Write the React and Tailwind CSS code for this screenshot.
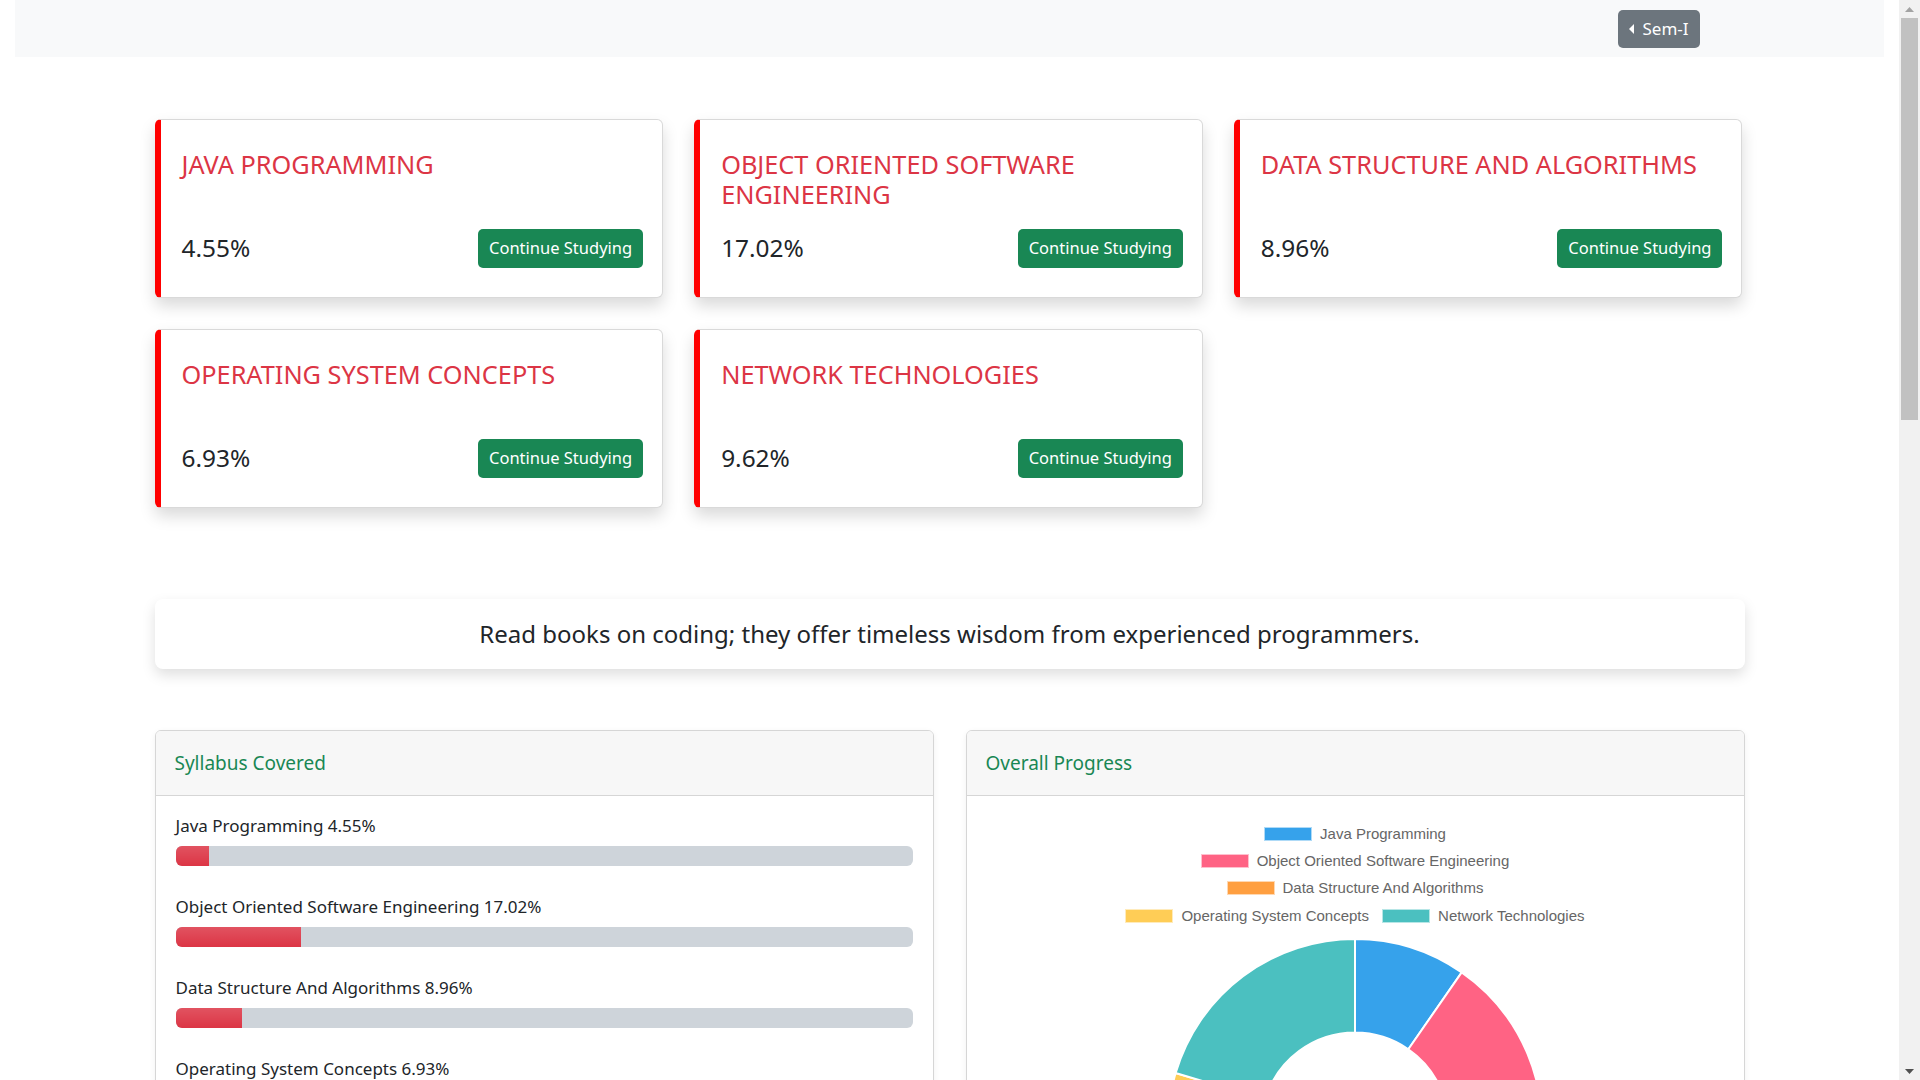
import React from "react";

const subjects = [
  { name: "JAVA PROGRAMMING", pct: "4.55%" },
  { name: "OBJECT ORIENTED SOFTWARE ENGINEERING", pct: "17.02%" },
  { name: "DATA STRUCTURE AND ALGORITHMS", pct: "8.96%" },
  { name: "OPERATING SYSTEM CONCEPTS", pct: "6.93%" },
  { name: "NETWORK TECHNOLOGIES", pct: "9.62%" },
];

const progress = [
  { label: "Java Programming", value: 4.55 },
  { label: "Object Oriented Software Engineering", value: 17.02 },
  { label: "Data Structure And Algorithms", value: 8.96 },
  { label: "Operating System Concepts", value: 6.93 },
  { label: "Network Technologies", value: 9.62 },
];

const colors = ["#36a2eb", "#ff6384", "#ff9f40", "#ffcd56", "#4bc0c0"];

const legendRows = [[0], [1], [2], [3, 4]];

function SubjectCard({ name, pct }) {
  return (
    <div className="bg-white rounded-[6px] border border-[#d9d9d9] border-l-[6px] border-l-[#ff0000] shadow-[0_8px_16px_rgba(0,0,0,0.15)] pt-[29px] pb-[29px] pl-[21px] pr-[19px]">
      <h4 className="text-[25.3px] leading-[30px] text-[#dc3545] min-h-[60px] mb-[20px] font-normal">
        {name}
      </h4>
      <div className="flex items-center justify-between h-[39px]">
        <span className="text-[24.4px] text-[#212529]">{pct}</span>
        <button className="h-[39px] px-[11px] rounded-[5px] bg-[#198754] text-white text-[16.5px]">
          Continue Studying
        </button>
      </div>
    </div>
  );
}

function Doughnut() {
  const values = progress.map((p) => p.value);
  const total = values.reduce((a, b) => a + b, 0);
  const cx = 190;
  const cy = 190;
  const R = 187;
  const r = 93.5;
  const pt = (rad, deg) => {
    const a = (deg * Math.PI) / 180;
    return [cx + rad * Math.sin(a), cy - rad * Math.cos(a)];
  };
  let acc = 0;
  const paths = values.map((v, i) => {
    const start = (acc / total) * 360;
    acc += v;
    const end = (acc / total) * 360;
    const large = end - start > 180 ? 1 : 0;
    const [x1, y1] = pt(R, start);
    const [x2, y2] = pt(R, end);
    const [x3, y3] = pt(r, end);
    const [x4, y4] = pt(r, start);
    const d = `M ${x1} ${y1} A ${R} ${R} 0 ${large} 1 ${x2} ${y2} L ${x3} ${y3} A ${r} ${r} 0 ${large} 0 ${x4} ${y4} Z`;
    return <path key={i} d={d} fill={colors[i]} stroke="#ffffff" strokeWidth="2" />;
  });
  return (
    <svg width="380" height="380" viewBox="0 0 380 380" className="block">
      {paths}
    </svg>
  );
}

function Scrollbar() {
  return (
    <div className="w-[21px] h-screen shrink-0 bg-[#f1f1f1] flex flex-col items-center">
      <div className="h-[18px] w-full flex items-center justify-center">
        <svg width="9" height="5" viewBox="0 0 9 5">
          <polygon points="0,5 4.5,0 9,5" fill="#a3a3a3" />
        </svg>
      </div>
      <div className="w-[17px] h-[402px] bg-[#c1c1c1]"></div>
      <div className="flex-1"></div>
      <div className="h-[18px] w-full flex items-center justify-center">
        <svg width="9" height="5" viewBox="0 0 9 5">
          <polygon points="0,0 9,0 4.5,5" fill="#505050" />
        </svg>
      </div>
    </div>
  );
}

export default function App() {
  return (
    <div className="flex h-screen overflow-hidden bg-white font-['Noto_Sans',sans-serif] text-[#212529]">
      <main className="w-[1899px] shrink-0 h-screen overflow-hidden px-[15px]">
        <nav className="h-[57px] bg-[#f8f9fa] flex items-center justify-end pr-[184px]">
          <button className="h-[38px] w-[82px] rounded-[5px] bg-[#6c757d] text-white text-[17px] flex items-center justify-center gap-[8px]">
            <span className="w-0 h-0 border-y-[5px] border-y-transparent border-r-[5px] border-r-white"></span>
            <span>Sem-I</span>
          </button>
        </nav>

        <div className="w-[1590px] mx-auto pb-[120px]">
          <div className="mt-[62px] grid grid-cols-3 gap-x-[31px] gap-y-[31px] w-[1588px]">
            {subjects.map((s) => (
              <SubjectCard key={s.name} name={s.name} pct={s.pct} />
            ))}
          </div>

          <div className="mt-[91px] h-[70px] bg-white rounded-[8px] shadow-[0_6px_14px_rgba(0,0,0,0.13)] flex items-center justify-center">
            <p className="text-[24px] text-[#212529]">
              Read books on coding; they offer timeless wisdom from experienced programmers.
            </p>
          </div>

          <div className="mt-[61px] grid grid-cols-2 gap-x-[32px] items-start">
            <div className="bg-white rounded-[6px] border border-[#d6d6d6] shadow-[0_2px_6px_rgba(0,0,0,0.06)] overflow-hidden">
              <div className="h-[65px] bg-[#f7f7f7] border-b border-[#d6d6d6] flex items-center pl-[19px]">
                <span className="text-[19px] text-[#198754]">Syllabus Covered</span>
              </div>
              <div className="pt-[18px] pb-[20px] px-[20px] flex flex-col gap-[29px]">
                {progress.map((p) => (
                  <div key={p.label}>
                    <div className="h-[24px] leading-[24px] text-[17px] text-[#212529] mb-[8px]">
                      {p.label} {p.value.toFixed(2)}%
                    </div>
                    <div className="h-[20px] rounded-[6px] bg-[#ced4da] overflow-hidden">
                      <div
                        className="h-full bg-[#dc3545] bg-[linear-gradient(180deg,rgba(255,255,255,0.15),rgba(255,255,255,0))]"
                        style={{ width: `${p.value}%` }}
                      ></div>
                    </div>
                  </div>
                ))}
              </div>
            </div>

            <div className="bg-white rounded-[6px] border border-[#d6d6d6] shadow-[0_2px_6px_rgba(0,0,0,0.06)] overflow-hidden">
              <div className="h-[65px] bg-[#f7f7f7] border-b border-[#d6d6d6] flex items-center pl-[19px]">
                <span className="text-[19px] text-[#198754]">Overall Progress</span>
              </div>
              <div className="pt-[24px] pb-[30px] flex flex-col items-center">
                <div className="flex flex-col items-center font-['Liberation_Sans',Arial,sans-serif]">
                  {legendRows.map((row, ri) => (
                    <div key={ri} className="h-[27.4px] flex items-center justify-center gap-[13px]">
                      {row.map((i) => (
                        <div key={i} className="flex items-center gap-[8px]">
                          <span
                            className="block w-[48px] h-[14px] border border-white/60"
                            style={{ backgroundColor: colors[i] }}
                          ></span>
                          <span className="text-[15px] text-[#666666] leading-[18px]">
                            {progress[i].label}
                          </span>
                        </div>
                      ))}
                    </div>
                  ))}
                </div>
                <div className="mt-[6px]">
                  <Doughnut />
                </div>
              </div>
            </div>
          </div>
        </div>
      </main>
      <Scrollbar />
    </div>
  );
}
